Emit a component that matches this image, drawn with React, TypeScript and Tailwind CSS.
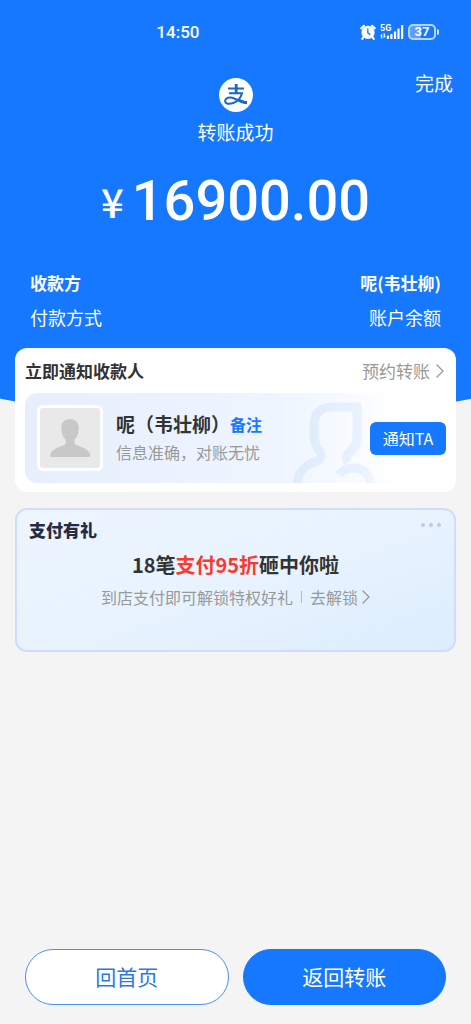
import type { ReactNode } from "react";
import { ChevronRight } from "lucide-react";

const details = [
    { label: "收款方", value: "呢(韦壮柳)", strong: true },
    { label: "付款方式", value: "账户余额", strong: false },
];

function AlarmIcon() {
    return (
        <svg viewBox="0 0 16 16" className="w-4 h-4" aria-hidden="true">
            <circle cx="8" cy="8.4" r="6.6" fill="#fff" />
            <path d="M1.300 4.300 4 1.800M14.700 4.300 12 1.800M3.400 13.200 2.300 14.800M12.600 13.200l1.100 1.600" stroke="#fff" strokeWidth="2.200" strokeLinecap="round" />
            <path d="M7.800 5v3.800l2.200 1.600" stroke="#1677ff" strokeWidth="1.300" fill="none" strokeLinecap="round" />
        </svg>
    );
}

function SignalIcon() {
    return (
        <div className="relative w-6 h-4">
            <span className="absolute left-0 top-0 text-[9px] leading-[8px] font-bold font-[Roboto,sans-serif]">5G</span>
            <svg viewBox="0 0 24 16" className="w-6 h-4" fill="#fff" aria-hidden="true">
                <path d="M0 12 2.200 9.500v5H.9V12zM5.800 12l-2.200 2.500v-5h1.300V12z" />
                <rect x="6.800" y="11.500" width="2.200" height="3.500" rx=".5" />
                <rect x="10.300" y="10" width="2.200" height="5" rx=".5" />
                <rect x="13.900" y="7.500" width="2.200" height="7.500" rx=".5" />
                <rect x="17.400" y="4.500" width="2.200" height="10.500" rx=".5" />
                <rect x="21" y="1" width="2.200" height="14" rx=".5" />
            </svg>
        </div>
    );
}

function Battery() {
    return (
        <div className="flex items-center gap-px">
            <div className="w-7 h-4 rounded-[5px] border-2 border-[#b9d5ff] bg-linear-to-r from-[#5c9eff] from-45% to-[#1677ff] to-45% flex items-center justify-center text-[13px] leading-3 font-bold font-[Roboto,sans-serif]">
                37
            </div>
            <span className="w-0.5 h-1.5 rounded-r-sm bg-[#dbe9ff]" />
        </div>
    );
}

function PayLogo() {
    return (
        <svg viewBox="0 0 34 34" className="w-[34px] h-[34px]" aria-hidden="true">
            <circle cx="17" cy="17" r="17" fill="#fff" />
            <g fill="none" stroke="#1a66c9">
                <path d="M9 10.500h16" strokeWidth="2" />
                <path d="M17.200 6v9.500" strokeWidth="2.800" />
                <path d="M10 15.300h13c-1 3.700-3.500 7-6.700 8.900-3.500 2-9 2.500-10-.4-.9-2.900 2.200-4.600 5.500-4.200 4.500.5 8.200 4.400 16.200 5" strokeWidth="2" />
                <path d="M20 22.400c2.500 1.200 4.800 2 8 2.400" strokeWidth="3" />
            </g>
        </svg>
    );
}

function Avatar() {
    return (
        <div className="w-[66px] h-[66px] shrink-0 rounded-md border-[3px] border-white bg-[#e9e9e9]">
            <svg viewBox="0 0 60 60" fill="#c8c8c8" aria-label="头像">
                <path d="M30 11c6 0 9 4 8.700 10-.2 5-1.700 8.500-4.200 10.500v3c0 1.500 1 2.200 3 3 6 2.300 11.500 4.200 12.800 9.500.3 1.300-.3 2-1.500 2H11.700c-1.200 0-1.800-.7-1.500-2 1.300-5.300 6.800-7.200 12.800-9.500 2-.8 2.700-1.500 2.700-3v-3c-2.500-2-4.200-5.500-4.400-10.500C21 15 24 11 30 11z" />
            </svg>
        </div>
    );
}

function Watermark() {
    return (
        <svg viewBox="0 0 90 82" className="absolute bottom-0 right-[66px] w-[90px] h-[82px]" fill="none" stroke="url(#watermark)" strokeWidth="9" aria-hidden="true">
            <defs>
                <linearGradient id="watermark" gradientUnits="userSpaceOnUse" x1="0" y1="0" x2="90" y2="0">
                    <stop offset="0.200" stopColor="#e0ecfc" />
                    <stop offset="0.800" stopColor="#e9f2fe" />
                    <stop offset="1" stopColor="#f5f9ff" />
                </linearGradient>
            </defs>
            <path d="M7 84c1-12 6-18 15-22 8-3 11-6 8-11-4-5-6-9-6-16V24C24 12 31 6 42 6h25v28c0 8-2 12-6 16-5 5-6 7-3 11" />
            <path d="M49 74c3-5 9-7 15-7 9 0 16 6 17 17" />
        </svg>
    );
}

function PillButton({ className, children }: { className: string; children: ReactNode }) {
    return (
        <button type="button" className={`flex-1 h-14 rounded-full border text-[21px] ${className}`}>
            {children}
        </button>
    );
}

export default function App() {
    return (
        <div className="relative min-h-screen flex flex-col overflow-hidden bg-[#f4f4f4] font-['Noto_Sans_CJK_SC',sans-serif] text-[#333]">
            {/* blue backdrop with a curved lower edge */}
            <div className="absolute inset-x-0 top-0 h-[422px] overflow-hidden" aria-hidden="true">
                <div className="absolute bottom-0 left-1/2 -translate-x-1/2 w-[2400px] h-[2400px] rounded-full bg-[#1677ff]" />
            </div>

            <header className="relative text-white">
                <div className="grid grid-cols-3 items-center h-16 pr-8">
                    <time className="col-start-2 pl-[10px] pt-0.5 text-[17px] font-medium font-[Roboto,sans-serif]">14:50</time>
                    <div className="flex items-center justify-end gap-1">
                        <AlarmIcon />
                        <SignalIcon />
                        <Battery />
                    </div>
                </div>

                <div className="grid grid-cols-3 items-start px-[18px]">
                    <div className="col-start-2 pt-[14px] flex flex-col items-center">
                        <PayLogo />
                        <h1 className="mt-[6px] text-[19px] leading-7">转账成功</h1>
                    </div>
                    <button type="button" className="justify-self-end pt-[5px] text-[19px] leading-7">完成</button>
                </div>

                <p className="mt-[23px] flex items-center justify-center gap-2 leading-[64px] font-medium">
                    <span className="text-[40px] leading-[60px]">¥</span>
                    <span className="text-[56px] font-[Roboto,sans-serif]">16900.00</span>
                </p>

                <dl className="mt-9 px-[30px] flex flex-col gap-[6px] leading-7">
                    {details.map((row) => (
                        <div key={row.label} className={row.strong ? "flex justify-between text-[17px] font-bold" : "flex justify-between text-[18px]"}>
                            <dt>{row.label}</dt>
                            <dd>{row.value}</dd>
                        </div>
                    ))}
                </dl>
            </header>

            <main className="relative mt-[17px] px-[15px] flex flex-col gap-4">
                <section className="rounded-xl bg-white px-[10px] pt-px pb-[9px]">
                    <div className="h-11 flex items-center justify-between">
                        <h2 className="text-[17px] font-bold">立即通知收款人</h2>
                        <a href="#schedule" className="flex items-center text-[17px] text-[#999]">
                            预约转账
                            <ChevronRight className="w-6 h-6 -mr-1.5 -ml-0.5" strokeWidth={1.3} />
                        </a>
                    </div>
                    <div className="relative h-[90px] overflow-hidden rounded-xl bg-linear-to-r from-[#e7effd] via-[#eef5ff] via-60% to-white to-90% pl-3 flex items-center">
                        <Watermark />
                        <Avatar />
                        <div className="relative ml-[13px] flex-1">
                            <div className="flex items-center leading-7">
                                <span className="text-[19px] font-bold">呢（韦壮柳）</span>
                                <a href="#remark" className="text-[16px] font-bold text-[#1677ff]">备注</a>
                            </div>
                            <p className="text-[16px] leading-7 text-[#999]">信息准确，对账无忧</p>
                        </div>
                        <button type="button" className="relative w-[76px] h-[33px] rounded-md bg-[#1677ff] text-[16px] text-white">通知TA</button>
                    </div>
                </section>

                <section className="relative h-36 rounded-xl border-2 border-[#cfddfb] bg-linear-to-br from-[#edf5fe] via-[#e8f3fe] to-[#dcedfe] px-3 pt-2">
                    <h2 className="text-[17px] leading-6 font-black text-[#262b40]">支付有礼</h2>
                    <button type="button" aria-label="更多" className="absolute right-3 top-3 flex gap-1 p-px">
                        <span className="w-1 h-1 rounded-full bg-[#bccbe0]" />
                        <span className="w-1 h-1 rounded-full bg-[#bccbe0]" />
                        <span className="w-1 h-1 rounded-full bg-[#bccbe0]" />
                    </button>
                    <p className="mt-[9px] text-center text-[20px] leading-7 font-bold">
                        18笔<span className="text-[#f93a2f]">支付95折</span>砸中你啦
                    </p>
                    <div className="mt-[6px] flex items-center justify-center text-[16px] leading-6 text-[#999]">
                        <span>到店支付即可解锁特权好礼</span>
                        <span className="mx-2 w-px h-3 bg-[#bbb]" />
                        <a href="#unlock" className="flex items-center">
                            去解锁
                            <ChevronRight className="w-6 h-6 -mr-2 -ml-1" strokeWidth={1.3} />
                        </a>
                    </div>
                </section>
            </main>

            <footer className="relative mt-auto px-[25px] pt-6 pb-[19px] flex gap-[14px]">
                <PillButton className="border-[#4a90ee] bg-white text-[#2b78e4]">回首页</PillButton>
                <PillButton className="border-[#1677ff] bg-[#1677ff] text-white">返回转账</PillButton>
            </footer>
        </div>
    );
}
